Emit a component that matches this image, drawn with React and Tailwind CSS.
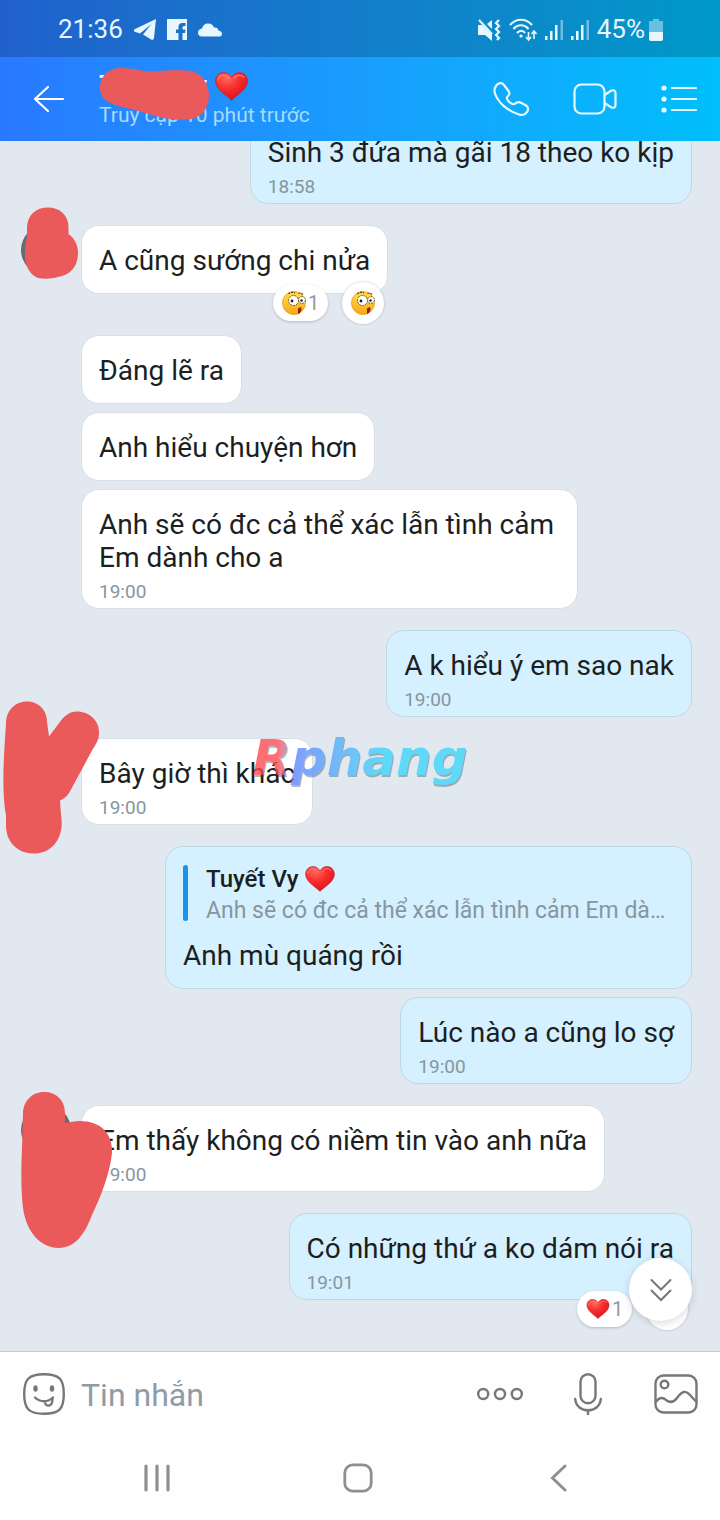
import React, { useState } from "react";

const Heart = ({ className }) => (
  <svg viewBox="0 0 32 28" className={className} aria-hidden="true">
    <defs>
      <radialGradient id="heartFill" cx="0.35" cy="0.2" r="0.85">
        <stop offset="0" stopColor="#ff6a5c" />
        <stop offset="0.45" stopColor="#f92e2e" />
        <stop offset="1" stopColor="#d90f1c" />
      </radialGradient>
    </defs>
    <path
      d="M16 27.500C12 23 1 17.500 .5 9.500 .2 4 4 .5 8.500 .5 12 .5 14.600 2.500 16 5.200 17.400 2.500 20 .5 23.500 .5 28 .5 31.800 4 31.500 9.500 31 17.500 20 23 16 27.500Z"
      fill="url(#heartFill)"
      stroke="#b5222b"
      strokeWidth="0.6"
    />
    <path d="M3 8c.5-3 2.500-5 5.500-5 2.500 0 4.500 1.400 5.500 3.500" fill="none" stroke="#ff8478" strokeWidth="1" strokeLinecap="round" />
    <path d="M19 6c1-2 2.500-3 4.500-3 2 0 3.500.8 4.500 2.200" fill="none" stroke="#ff8478" strokeWidth="1" strokeLinecap="round" />
  </svg>
);

const Goofy = ({ className }) => (
  <svg viewBox="0 0 24 24" className={className} aria-hidden="true">
    <defs>
      <linearGradient id="faceFill" x1="0" y1="0" x2="0" y2="1">
        <stop offset="0" stopColor="#ffe04a" />
        <stop offset="1" stopColor="#f9a61a" />
      </linearGradient>
    </defs>
    <circle cx="12" cy="12" r="11.500" fill="url(#faceFill)" stroke="#e89a1c" strokeWidth="0.800" />
    <path d="M6.500 3C8 1 11 1 13 2M16.500 2.500C18 1.500 20 2 21.500 4" fill="none" stroke="#5b3a12" strokeWidth="1.200" strokeDasharray="2 1" />
    <circle cx="11.500" cy="9.500" r="5" fill="#fff" stroke="#6b4a1a" strokeWidth="1" strokeDasharray="2 1" />
    <circle cx="20" cy="9" r="3.400" fill="#fff" stroke="#6b4a1a" strokeWidth="1" strokeDasharray="2 1" />
    <circle cx="10" cy="10" r="1.400" fill="#222" />
    <circle cx="19.500" cy="9.500" r="1.200" fill="#222" />
    <path d="M16 17.500l3-1.500c1 2 0 6-3 7z" fill="#8c1f12" />
  </svg>
);

// Hand painted marks that hide the avatars
const marks = {
  first: (
    <svg width="100" height="90" viewBox="0 200 100 90" className="absolute left-0 -top-[25px]" aria-hidden="true">
      <path
        d="M48 207.500c12 0 20.500 8 20.500 19v7.500c6 4 9.500 11 9.500 19 0 14-8 22-20 24-6 2-14 2-20 1-6-2-10-8-12-14-2-9-1-18 1-28l0-9c.5-12 9-19.500 21-19.500z"
        fill="#eb5a5b"
      />
    </svg>
  ),
  second: (
    <svg width="110" height="160" viewBox="0 698 110 160" className="absolute left-0 -top-10" aria-hidden="true">
      <path
        d="M27 701.500c11 0 20 8 20 20l2 15 9-12c5-7 10-13 19-13 13 0 23 10 22 22 0 7-4 12-7 17l-21 39c-3 6-6 9-11 11l1 14c4 23-9 39-27 39-17 0-28-12-28-28l0-10c-4-22-3-50 0-92 0-13 9-22 21-22z"
        fill="#eb5a5b"
      />
    </svg>
  ),
  third: (
    <svg width="120" height="164" viewBox="0 1088 120 164" className="absolute left-0 -top-[17px]" aria-hidden="true">
      <path
        d="M44 1092c12 0 21 8 21 21v10c6-1 9-2 15-2 20 0 33 12 32 32-2 19-10 41-20 62-7 19-17 33-33 33-19 0-33-17-36-40-2-17-2-38-1-60l1-34c0-13 9-22 21-22z"
        fill="#eb5a5b"
      />
    </svg>
  ),
};

const messages = [
  { id: 1, own: true, text: "Sinh 3 đứa mà gãi 18 theo ko kịp", time: "18:58", gap: "-mt-6" },
  { id: 2, text: "A cũng sướng chi nửa", avatar: "first", reaction: "goofy", gap: "mt-[21px]" },
  { id: 3, text: "Đáng lẽ ra", gap: "mt-[41px]" },
  { id: 4, text: "Anh hiểu chuyện hơn", gap: "mt-2" },
  { id: 5, text: "Anh sẽ có đc cả thể xác lẫn tình cảm\nEm dành cho a", time: "19:00", width: "w-[497px]", gap: "mt-2" },
  { id: 6, own: true, text: "A k hiểu ý em sao nak", time: "19:00", gap: "mt-[21px]" },
  { id: 7, text: "Bây giờ thì khác", time: "19:00", avatar: "second", gap: "mt-[21px]" },
  {
    id: 8,
    own: true,
    text: "Anh mù quáng rồi",
    quote: { name: "Tuyết Vy", text: "Anh sẽ có đc cả thể xác lẫn tình cảm Em dành cho a" },
    width: "w-[527px]",
    gap: "mt-[21px]",
  },
  { id: 9, own: true, text: "Lúc nào a cũng lo sợ", time: "19:00", gap: "mt-2" },
  { id: 10, text: "Em thấy không có niềm tin vào anh nữa", time: "19:00", avatar: "third", gap: "mt-[21px]" },
  { id: 11, own: true, text: "Có những thứ a ko dám nói ra", time: "19:01", reaction: "heart", gap: "mt-[21px]" },
];

const Reactions = ({ type }) => (
  <div className="absolute right-[3px] -bottom-[31px] flex items-center gap-3.5">
    <button
      aria-label="1 reaction"
      className="flex h-9 w-[55px] items-center justify-center gap-0.5 rounded-full bg-white text-[20px] text-[#999] shadow-[0_1px_3px_rgba(0,0,0,0.2)]"
    >
      {type === "heart" ? <Heart className="h-5 w-6" /> : <Goofy className="size-6" />}
      <span>1</span>
    </button>
    <button
      aria-label="Add reaction"
      className="flex size-[42px] items-center justify-center rounded-full bg-white shadow-[0_0_3px_rgba(0,0,0,0.2)]"
    >
      {type === "heart" ? <Heart className="h-5 w-6" /> : <Goofy className="size-6" />}
    </button>
  </div>
);

const Bubble = ({ message }) => {
  const { own, text, time, quote, reaction, width } = message;
  return (
    <div
      className={`relative rounded-[18px] border px-[17px] pt-[18px] ${
        own ? "border-[#bfd8e6] bg-[#d5f0ff]" : "border-[#d9dee4] bg-white"
      } ${time ? "pb-1" : "pb-4"} ${width || "max-w-[527px]"}`}
    >
      {quote && (
        <blockquote className="mb-[18px] flex h-14 gap-[18px]">
          <span className="w-[5px] shrink-0 rounded-full bg-[#1a94ea]" />
          <div className="min-w-0 flex-1">
            <p className="flex h-7 items-center gap-1.5 text-[24px] leading-7 font-medium">
              {quote.name} <Heart className="h-[26px] w-[30px]" />
            </p>
            <p className="mt-1 truncate text-[23px] leading-7 text-[#8796a0]">{quote.text}</p>
          </div>
        </blockquote>
      )}
      <p className="text-[28px] leading-[33px] whitespace-pre-line">{text}</p>
      {time && <time className="mt-1.5 block text-[19px] leading-6 text-[#8796a0]">{time}</time>}
      {reaction && <Reactions type={reaction} />}
    </div>
  );
};

const Signal = () => (
  <svg width="18" height="22" viewBox="0 0 18 22" fill="#e6fbff" aria-hidden="true">
    <rect x="0" y="17" width="2.500" height="4" />
    <rect x="5" y="12" width="2.500" height="9" />
    <rect x="10" y="6" width="2.500" height="15" />
    <rect x="15.500" y="1" width="2.500" height="20" opacity="0.45" />
  </svg>
);

const StatusBar = () => (
  <div className="flex h-[57px] items-center justify-between bg-black/20 pt-0.5 pr-[57px] pl-[58px] text-[26px] text-[#e8f7ff]">
    <div className="flex items-center gap-[11px]">
      <span>21:36</span>
      <svg width="22" height="21" viewBox="0 0 22 21" fill="currentColor" aria-hidden="true">
        <path d="M22 0 0 10.500v2l6 2L17.500 5 9 15.500l9 5.500q1.500 0 2-2z" />
      </svg>
      <svg width="20" height="21" viewBox="0 0 20 21" fill="currentColor" aria-hidden="true">
        <path d="M0 0h20v21h-4.500v-7h2.500l.5-3.500h-3V8.500q0-1.500 1.500-1.500h1.500V4h-3q-4 0-4 4v2.500H9V14h2.500v7H0z" />
      </svg>
      <svg width="24" height="14" viewBox="0 0 24 14" fill="currentColor" aria-hidden="true">
        <path d="M4 13.500C1.500 13.500 0 12 0 9.500 0 7.500 1.500 6 4 5.500 4.500 2.500 7 .5 10 .5c3 0 5 1.500 6 4 2.500-.5 4 .8 4.500 3 2 .3 3.500 1.500 3.500 3.500s-1.500 2.500-3 2.500z" />
      </svg>
    </div>
    <div className="flex items-center gap-2">
      <svg width="23" height="24" viewBox="0 0 23 24" aria-hidden="true">
        <path d="M0 7h4l10 9v7l-7-6H0zM9 6l5-4v9z" fill="currentColor" />
        <path d="M1 2l13 14" stroke="currentColor" strokeWidth="2" />
        <path d="M21 2l-3 3 3 3-3 3 3 3-3 3 3 3-2 2" fill="none" stroke="currentColor" strokeWidth="2.200" />
      </svg>
      <svg width="28" height="24" viewBox="0 0 28 24" fill="none" stroke="currentColor" strokeWidth="2.200" aria-hidden="true">
        <path d="M1 7c6-7 16-7 22 0M4.500 11c4-5 11-5 15 0M8 15c2.500-3 6-3 8 0" />
        <circle cx="12" cy="18" r="1.600" fill="currentColor" stroke="none" />
        <path d="M19.500 14v8M17 19l2.500 3 2.500-3M25 21v-8M22.500 16l2.500-3 2.500 3" strokeWidth="1.600" />
      </svg>
      <div className="flex gap-2">
        <Signal />
        <Signal />
      </div>
      <span>45%</span>
      <svg width="14" height="22" viewBox="0 0 14 22" fill="currentColor" className="-ml-1" aria-hidden="true">
        <path d="M4 0h6v2h4v11H0V2h4z" opacity="0.45" />
        <path d="M0 13h14v7q0 2-2 2H2q-2 0-2-2z" />
      </svg>
    </div>
  </div>
);

const ChatHeader = () => (
  <div className="flex h-[84px] items-center pr-[23px] pl-[33px] text-[#e6fbff]">
    <button aria-label="Back" className="mr-[34px] w-8">
      <svg width="32" height="28" viewBox="0 0 32 28" fill="none" stroke="white" strokeWidth="2.200" strokeLinecap="round" strokeLinejoin="round">
        <path d="M15 2 2 14l13 12M2 14h28" />
      </svg>
    </button>
    <div className="relative min-w-0 flex-1">
      <h1 className="flex h-8 items-center gap-2 text-[28px] leading-8 font-medium text-white">
        Tuyết Vy <Heart className="h-[29px] w-[33px]" />
      </h1>
      <p className="text-[21px] leading-[26px] text-[#a5dcff]">Truy cập 10 phút trước</p>
      <svg width="112" height="56" viewBox="0 0 112 56" className="absolute -top-0.5 left-0" aria-hidden="true">
        <path
          d="M22 0c12 0 24 5 38 3 10-1 20-1 27-.5 14 0 22 11 23 24 0 15-9 25-23 25-18 2-34-5-53-10C13 37 1 33 1 20 1 8 9 0 22 0z"
          fill="#eb5a5b"
        />
      </svg>
    </div>
    <div className="flex items-center gap-11">
      <button aria-label="Call">
        <svg width="36" height="36" viewBox="0 0 36 36" fill="none" stroke="currentColor" strokeWidth="2.200" strokeLinejoin="round">
          <path d="M3 5C5 1.500 9 1 11 4l4.500 6c1.500 2 1 3.500-.5 5-1.500 1.300-1.500 2.500-.5 4 1.500 2 3 3.500 5 4 2 .6 3-1 4.500-1.500 1.500-.5 3-.3 4.500.5l4.500 2.500c2.500 1.500 2.500 4.500 1 6.500-2 3-5 3.500-8 2.500C14 29.500 5 21.500 2 12.500 1 9.500 1.500 7 3 5z" />
        </svg>
      </button>
      <button aria-label="Video call">
        <svg width="44" height="32" viewBox="0 0 44 32" fill="none" stroke="currentColor" strokeWidth="2.200" strokeLinejoin="round">
          <rect x="1.500" y="1.500" width="30" height="29" rx="7" />
          <path d="M31.500 12l7-4.500q4-1 4 2.500v12q0 3.500-4 2.500l-7-4.500" />
        </svg>
      </button>
      <button aria-label="Chat options">
        <svg width="36" height="28" viewBox="0 0 36 28" fill="currentColor">
          <circle cx="3" cy="3" r="2.600" />
          <circle cx="3" cy="14" r="2.600" />
          <circle cx="3" cy="25" r="2.600" />
          <path d="M11 3h24M11 14h24M11 25h24" stroke="currentColor" strokeWidth="2.200" strokeLinecap="round" />
        </svg>
      </button>
    </div>
  </div>
);

const Composer = () => {
  const [draft, setDraft] = useState("");
  return (
    <form className="flex h-[84px] items-center border-t border-[#c3cad0] pr-[22px] pl-[23px] text-[#777]">
      <button type="button" aria-label="Stickers">
        <svg width="42" height="42" viewBox="0 0 42 42" fill="none" stroke="currentColor" strokeWidth="2.400" strokeLinecap="round">
          <path d="M21 1.200c15 0 19.800 4.500 19.800 19.800S36 40.800 21 40.800 1.200 36 1.200 21 6 1.200 21 1.200z" />
          <ellipse cx="12.500" cy="15.500" rx="2.200" ry="3.200" fill="currentColor" stroke="none" />
          <ellipse cx="29" cy="15.500" rx="2.200" ry="3.200" fill="currentColor" stroke="none" />
          <path d="M12 24.500c5 5 13 5 18 0M22 28.500c0 6 8 6 7.500-3.500" />
        </svg>
      </button>
      <input
        aria-label="Tin nhắn"
        placeholder="Tin nhắn"
        value={draft}
        onChange={(e) => setDraft(e.target.value)}
        className="ml-4 h-12 min-w-0 flex-1 bg-transparent pt-0.5 text-[32px] text-[#222] outline-none placeholder:text-[#8f9ba5]"
      />
      <button type="button" aria-label="More">
        <svg width="46" height="14" viewBox="0 0 46 14" fill="none" stroke="currentColor" strokeWidth="2.400">
          <circle cx="6.200" cy="7" r="5" />
          <circle cx="23" cy="7" r="5" />
          <circle cx="39.800" cy="7" r="5" />
        </svg>
      </button>
      <button type="button" aria-label="Voice message" className="ml-[51px]">
        <svg width="28" height="42" viewBox="0 0 28 42" fill="none" stroke="currentColor" strokeWidth="2.400" strokeLinecap="round">
          <rect x="6.500" y="1.200" width="15" height="29" rx="7.500" />
          <path d="M1.200 26c1 15 24.600 15 25.600 0M14 37.500v4" />
        </svg>
      </button>
      <button type="button" aria-label="Send picture" className="ml-[52px]">
        <svg width="44" height="40" viewBox="0 0 44 40" fill="none" stroke="currentColor" strokeWidth="2.400">
          <rect x="1.500" y="1.500" width="41" height="37" rx="8" />
          <circle cx="10.500" cy="10.500" r="3.800" />
          <path d="M2 28c3-5 7-5 10-2 4 3 8 2 11-2 5-7 9-8 13-3l6.500 7" />
        </svg>
      </button>
    </form>
  );
};

const NavBar = () => (
  <nav className="grid h-[85px] grid-cols-3 place-items-center pr-[61px] pl-14 text-[#8f8f8f]">
    <button aria-label="Recent apps">
      <svg width="26" height="28" viewBox="0 0 26 28" stroke="currentColor" strokeWidth="3.200" strokeLinecap="round">
        <path d="M2 2v24M13 2v24M24 2v24" />
      </svg>
    </button>
    <button aria-label="Home">
      <svg width="30" height="30" viewBox="0 0 30 30" fill="none" stroke="currentColor" strokeWidth="2.800">
        <rect x="1.800" y="1.800" width="26.400" height="26.400" rx="8" />
      </svg>
    </button>
    <button aria-label="Go back">
      <svg width="17" height="28" viewBox="0 0 17 28" fill="none" stroke="currentColor" strokeWidth="3" strokeLinecap="round">
        <path d="M15 2 2.500 14 15 26" />
      </svg>
    </button>
  </nav>
);

const App = () => {
  return (
    <div className="relative flex min-h-screen flex-col bg-[#fefefe] font-[Roboto,'Noto_Sans',sans-serif] text-[#1c1f22]">
      <header className="bg-linear-to-r from-[#2979ff] to-[#00bffb]">
        <StatusBar />
        <ChatHeader />
      </header>

      <main className="relative flex-1 overflow-hidden bg-[#e2e8f0] pb-[51px]">
        <ul>
          {messages.map((message) => (
            <li
              key={message.id}
              className={`relative flex ${message.gap} ${message.own ? "justify-end pr-7" : "pr-7 pl-[21px]"}`}
            >
              {!message.own && (
                <div className="w-[60px] shrink-0">
                  {message.avatar && <div className="size-[50px] rounded-full bg-[#686c6f]" />}
                </div>
              )}
              <Bubble message={message} />
              {message.avatar && marks[message.avatar]}
            </li>
          ))}
        </ul>
        <button
          aria-label="Scroll to latest"
          className="absolute right-7 bottom-[30px] flex size-[63px] items-center justify-center rounded-full bg-white shadow-[0_2px_8px_rgba(0,0,0,0.15)]"
        >
          <svg width="22" height="24" viewBox="0 0 22 24" fill="none" stroke="#777" strokeWidth="2" strokeLinecap="round">
            <path d="M1.500 2 11 11.500 20.500 2M1.500 12.500 11 22l9.500-9.500" />
          </svg>
        </button>
      </main>

      <Composer />
      <NavBar />

      {/* site watermark */}
      <div className="pointer-events-none absolute inset-0 flex items-center justify-center pb-1">
        <span className="bg-linear-to-r from-[#ff4a50] from-12% via-[#5f86ff] via-20% to-[#3fd6fa] to-60% bg-clip-text font-['DejaVu_Sans'] text-[50px] leading-[60px] font-bold text-transparent italic opacity-80 drop-shadow-[1px_2px_0_rgba(40,80,100,0.5)]">
          Rphang
        </span>
      </div>
    </div>
  );
};

export default App;
